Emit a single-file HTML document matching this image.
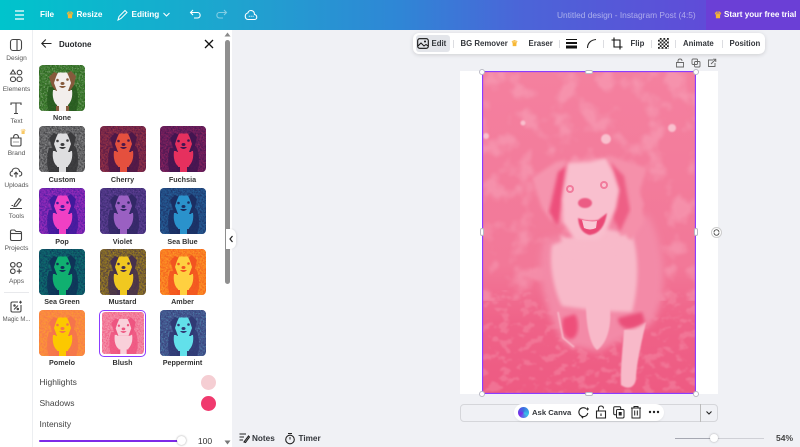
<!DOCTYPE html>
<html><head><meta charset="utf-8">
<style>
*{box-sizing:border-box}
html,body{margin:0;padding:0}
body{width:800px;height:447px;overflow:hidden;position:relative;background:#f0f1f5;font-family:"Liberation Sans",sans-serif;color:#222}
.a{position:absolute}
.top{left:0;top:0;width:800px;height:30px;background:linear-gradient(90deg,#00c4cc 0%,#1fa3cf 30%,#2f86d6 50%,#4b65d8 65%,#6a3fd8 100%);}
.top span{position:absolute;color:#fff;font-weight:bold;font-size:8.2px;line-height:30px;top:0;white-space:nowrap}
.rail{left:0;top:30px;width:33px;height:417px;background:#fff;border-right:1px solid #eceef1}
.ri{position:absolute;left:0;width:33px;text-align:center;font-size:6.6px;color:#555;white-space:nowrap}
.ri svg{display:block;position:absolute;left:9px;top:-17px;width:14px;height:14px;fill:none;stroke:#444;stroke-width:1.1}
.panel{left:33px;top:30px;width:199px;height:417px;background:#fff}
.th{position:absolute;width:46px;height:46px;border-radius:4px;overflow:hidden}
.th svg{display:block;width:46px;height:46px}
.lb{position:absolute;width:70px;text-align:center;font-size:7.2px;font-weight:bold;color:#333;white-space:nowrap;line-height:10px}
.h{position:absolute;background:#fff;border:1px solid #b9b9c4}
.tb{position:absolute;top:38px;font-size:7.8px;font-weight:bold;color:#33363b;line-height:12px;white-space:nowrap}
.sp{position:absolute;top:40px;width:1px;height:8px;background:#dcdde1}
</style></head><body>
<svg width="0" height="0" style="position:absolute">
<defs>
<filter id="sp" x="0" y="0" width="100%" height="100%"><feTurbulence type="fractalNoise" baseFrequency=".55" numOctaves="2" seed="3" result="t"/><feColorMatrix in="t" type="matrix" values="0 0 0 0 0 0 0 0 0 0 0 0 0 0 0 0 0 0 7 -3.300" result="n"/><feComposite in="SourceGraphic" in2="n" operator="in"/></filter>
<filter id="sp2" x="0" y="0" width="100%" height="100%"><feTurbulence type="fractalNoise" baseFrequency=".6" numOctaves="2" seed="8" result="t"/><feColorMatrix in="t" type="matrix" values="0 0 0 0 0 0 0 0 0 0 0 0 0 0 0 0 0 0 7 -3.700" result="n"/><feComposite in="SourceGraphic" in2="n" operator="in"/></filter>
<filter id="bok" x="0" y="0" width="100%" height="100%"><feTurbulence type="fractalNoise" baseFrequency=".045" numOctaves="3" seed="11" result="t"/><feColorMatrix in="t" type="matrix" values="0 0 0 0 0 0 0 0 0 0 0 0 0 0 0 0 0 0 5 -2.500" result="n"/><feComposite in="SourceGraphic" in2="n" operator="in"/><feGaussianBlur stdDeviation="1.200"/></filter>
<filter id="gra" x="0" y="0" width="100%" height="100%"><feTurbulence type="fractalNoise" baseFrequency=".09 .13" numOctaves="3" seed="5" result="t"/><feColorMatrix in="t" type="matrix" values="0 0 0 0 0 0 0 0 0 0 0 0 0 0 0 0 0 0 7 -3.700" result="n"/><feComposite in="SourceGraphic" in2="n" operator="in"/><feGaussianBlur stdDeviation=".7"/></filter>
<symbol id="dog" viewBox="0 0 46 46">
<rect width="46" height="46" style="fill:var(--b)"/>
<rect width="46" height="46" filter="url(#sp)" style="fill:var(--d)" opacity=".6"/>
<rect width="46" height="46" filter="url(#sp2)" style="fill:var(--l)" opacity=".25"/>
<path d="M10 22C7 32 8 42 10 46H37C40 38 40 28 36 20Z" style="fill:var(--d)" opacity=".85"/>
<path d="M14 25C13 32 15 38 18 40L19 46H28L29 40C32 37 34 32 33 25Z" style="fill:var(--l)"/>
<path d="M10 12L15 7L20 9H27L32 6L37 11L35 20L31 26H17L13 21Z" style="fill:var(--k)"/>
<path d="M19 7.500H28L30 12L32 18L29 26H18L15 18L17 12Z" style="fill:var(--l)"/>
<circle cx="18.500" cy="15" r="1.300" style="fill:var(--k)"/><circle cx="28.500" cy="14.500" r="1.300" style="fill:var(--k)"/>
<ellipse cx="23.500" cy="18.500" rx="2" ry="1.500" style="fill:var(--k)"/>
<path d="M20 21Q23.500 25 27 21Z" style="fill:var(--k)"/>
<rect x="17" y="41" width="3" height="5" style="fill:var(--k)"/><rect x="27" y="41" width="3" height="5" style="fill:var(--k)"/>
</symbol>
<filter id="b1"><feGaussianBlur stdDeviation="1.800"/></filter>
<filter id="b2"><feGaussianBlur stdDeviation="3.500"/></filter>
<filter id="b05"><feGaussianBlur stdDeviation=".7"/></filter>
<linearGradient id="bgG" x1="0" y1="0" x2="0" y2="1"><stop offset="0" stop-color="#f4809f"/><stop offset=".6" stop-color="#f27898"/><stop offset=".78" stop-color="#ef6288"/><stop offset="1" stop-color="#ee5a82"/></linearGradient>
</defs>
</svg>

<div class="a top">
<svg class="a" style="left:13px;top:8px" width="12" height="14" viewBox="0 0 12 14"><path d="M2 3H11M2 7H11M2 11H11" stroke="#fff" stroke-width="1.3"/></svg>
<span style="left:40px">File</span>
<span style="left:66px;color:#f7b733;font-size:9px">♛</span>
<span style="left:76.500px">Resize</span>
<svg class="a" style="left:116px;top:8px" width="13" height="14" viewBox="0 0 13 14"><path d="M2 12L3 8.500L9 2.500L11 4.500L5 10.500Z" fill="none" stroke="#fff" stroke-width="1"/></svg>
<span style="left:131.500px">Editing</span>
<svg class="a" style="left:162px;top:11px" width="9" height="7" viewBox="0 0 9 7"><path d="M1.500 2L4.500 5L7.500 2" fill="none" stroke="#fff" stroke-width="1.100"/></svg>
<svg class="a" style="left:189px;top:8px" width="13" height="13" viewBox="0 0 13 13"><path d="M4 2L1.500 4.500L4 7M2 4.500H8.500C12 4.500 12 10 8.500 10H5" fill="none" stroke="#fff" stroke-width="1.100"/></svg>
<svg class="a" style="left:215px;top:8px" width="13" height="13" viewBox="0 0 13 13" opacity=".45"><path d="M9 2L11.500 4.500L9 7M11 4.500H4.500C1 4.500 1 10 4.500 10H8" fill="none" stroke="#fff" stroke-width="1.100"/></svg>
<svg class="a" style="left:244px;top:8px" width="14" height="13" viewBox="0 0 14 13"><path d="M4 11.500H10.500C13.500 11.500 13.500 7 10.500 6.500C10.500 2 5 1 3.800 5C0.300 5.500 0.500 11.500 4 11.500Z" fill="none" stroke="#fff" stroke-width="1.100"/><path d="M4.800 8.300H5.800M6.700 8.300H7.700M8.600 8.300H9.600" stroke="#fff"/></svg>
<span style="left:557px;font-weight:normal;opacity:.5;font-size:8.400px">Untitled design - Instagram Post (4:5)</span>
<div class="a" style="left:706px;top:0;width:94px;height:30px;background:#6b3fd6"></div>
<span style="left:714px;color:#f7b733;font-size:9px">♛</span>
<span style="left:724px;font-size:8.100px">Start your free trial</span>
</div>

<div class="a rail">
<div class="ri" style="top:25px"><svg viewBox="0 0 14 14"><rect x="1.500" y="1.500" width="11" height="11" rx="2.500"/><path d="M8 1.500V12.500"/></svg>Design</div>
<div class="ri" style="top:56px"><svg viewBox="0 0 14 14"><path d="M4 1L6.500 5H1.500Z"/><circle cx="10.500" cy="3.500" r="2.300"/><rect x="1.500" y="8" width="5" height="4.500" rx="2"/><rect x="8" y="8" width="5" height="4.500" rx="2"/></svg>Elements</div>
<div class="ri" style="top:88px"><svg viewBox="0 0 14 14"><path d="M2 4V2H12V4M7 2V12.500M5 12.500H9"/></svg>Text</div>
<div class="ri" style="top:120px"><svg viewBox="0 0 14 14"><path d="M2 5H12V11.500Q12 13 10.500 13H3.500Q2 13 2 11.500Z"/><path d="M4.500 5Q4.500 1.500 7 1.500Q9.500 1.500 9.500 5"/><path d="M4.500 9H9.500" stroke-dasharray="1 1"/></svg>Brand<span class="a" style="left:20px;top:-22px;color:#f7b733;font-size:7px">♛</span></div>
<div class="ri" style="top:152px"><svg viewBox="0 0 14 14"><path d="M4 11H3C0.500 11 0.500 6.500 3 6.500C3.500 2 10 2 10.500 6.500C13.500 6.500 13.500 11 10.500 11H10"/><path d="M7 12.500V7.500M5 9.300L7 7.300L9 9.300"/></svg>Uploads</div>
<div class="ri" style="top:183px"><svg viewBox="0 0 14 14"><path d="M5.500 8.500L10 2.500L12 4L7.500 10L5 10.500Z"/><path d="M1 12.500H13M2.500 9.500H4"/></svg>Tools</div>
<div class="ri" style="top:215px"><svg viewBox="0 0 14 14"><path d="M1.500 3.500Q1.500 2 3 2H5.500L7 3.500H11Q12.500 3.500 12.500 5V11Q12.500 12.500 11 12.500H3Q1.500 12.500 1.500 11Z"/><path d="M1.500 5.500H12.500"/></svg>Projects</div>
<div class="ri" style="top:248px"><svg viewBox="0 0 14 14"><circle cx="3.800" cy="3.800" r="2.300"/><circle cx="10.200" cy="3.800" r="2.300"/><circle cx="3.800" cy="10.200" r="2.300"/><path d="M10.200 7.800V12.600M7.800 10.200H12.600"/></svg>Apps</div>
<div class="a" style="left:4px;top:262px;width:25px;height:1px;background:#e8e9ec"></div>
<div class="ri" style="top:287px;font-size:6px"><svg viewBox="0 0 14 14"><path d="M9 2H3.500Q2 2 2 3.500V10.500Q2 12 3.500 12H10.500Q12 12 12 10.500V5"/><path d="M5 9.500L9 5.500"/><circle cx="5.500" cy="5.500" r=".7"/><circle cx="8.800" cy="9" r=".7"/><path d="M11.500 .8V3.600M10.100 2.200H12.900"/></svg>Magic M...</div>
</div>

<div class="a panel"></div>
<svg class="a" style="left:40px;top:37px" width="13" height="13" viewBox="0 0 13 13"><path d="M11.500 6.500H2M5.800 2.500L1.800 6.500L5.800 10.500" fill="none" stroke="#222" stroke-width="1.100"/></svg>
<div class="a" style="left:59px;top:38px;font-size:8px;font-weight:bold;line-height:13px;color:#1f2226">Duotone</div>
<svg class="a" style="left:203px;top:38px" width="12" height="12" viewBox="0 0 12 12"><path d="M2 2L10 10M10 2L2 10" stroke="#111" stroke-width="1.300"/></svg>

<!-- thumbs -->
<div class="th" style="left:39px;top:65px"><svg viewBox="0 0 46 46" style="--b:#3f7d30;--d:#27591f;--k:#855a3c"><use href="#dog" style="--l:#f2eeec"/></svg></div>
<div class="lb" style="left:27px;top:113px">None</div>

<div class="th" style="left:39px;top:126px"><svg viewBox="0 0 46 46" style="--b:#6a6a6c;--d:#353537;--l:#dedee0;--k:#3a3a3c"><use href="#dog"/></svg></div>
<div class="th" style="left:99.500px;top:126px"><svg viewBox="0 0 46 46" style="--b:#7f2a48;--d:#4c1848;--l:#e4503e;--k:#4c1848"><use href="#dog"/></svg></div>
<div class="th" style="left:159.500px;top:126px"><svg viewBox="0 0 46 46" style="--b:#6c1f5c;--d:#421550;--l:#e6305e;--k:#421550"><use href="#dog"/></svg></div>
<div class="lb" style="left:27px;top:175px">Custom</div><div class="lb" style="left:87.500px;top:175px">Cherry</div><div class="lb" style="left:147.500px;top:175px">Fuchsia</div>

<div class="th" style="left:39px;top:188px"><svg viewBox="0 0 46 46" style="--b:#8228b6;--d:#401a9c;--l:#f040c4;--k:#401a9c"><use href="#dog"/></svg></div>
<div class="th" style="left:99.500px;top:188px"><svg viewBox="0 0 46 46" style="--b:#503888;--d:#322866;--l:#9a60c2;--k:#322866"><use href="#dog"/></svg></div>
<div class="th" style="left:159.500px;top:188px"><svg viewBox="0 0 46 46" style="--b:#245088;--d:#1b2e62;--l:#2a92cc;--k:#1b2e62"><use href="#dog"/></svg></div>
<div class="lb" style="left:27px;top:237px">Pop</div><div class="lb" style="left:87.500px;top:237px">Violet</div><div class="lb" style="left:147.500px;top:237px">Sea Blue</div>

<div class="th" style="left:39px;top:249px"><svg viewBox="0 0 46 46" style="--b:#0f5e6c;--d:#0f3358;--l:#10b070;--k:#0f3358"><use href="#dog"/></svg></div>
<div class="th" style="left:99.500px;top:249px"><svg viewBox="0 0 46 46" style="--b:#836a28;--d:#45304e;--l:#f0c820;--k:#45304e"><use href="#dog"/></svg></div>
<div class="th" style="left:159.500px;top:249px"><svg viewBox="0 0 46 46" style="--b:#fb8422;--d:#f25420;--l:#ffd040;--k:#f25420"><use href="#dog"/></svg></div>
<div class="lb" style="left:27px;top:297px">Sea Green</div><div class="lb" style="left:87.500px;top:297px">Mustard</div><div class="lb" style="left:147.500px;top:297px">Amber</div>

<div class="th" style="left:39px;top:310px"><svg viewBox="0 0 46 46" style="--b:#fb8b42;--d:#f5744c;--l:#fcc800;--k:#f5744c"><use href="#dog"/></svg></div>
<div class="a" style="left:99px;top:310px;width:47px;height:47px;border:1.500px solid #8b3dff;border-radius:5px"></div>
<div class="th" style="left:101.500px;top:312px;width:42px;height:42px;border-radius:3px"><svg viewBox="0 0 46 46" style="width:42px;height:42px;--b:#f4849f;--d:#ee5580;--l:#f9d0da;--k:#ee5580"><use href="#dog"/></svg></div>
<div class="th" style="left:159.500px;top:310px"><svg viewBox="0 0 46 46" style="--b:#46578f;--d:#303a74;--l:#62e0ea;--k:#303a74"><use href="#dog"/></svg></div>
<div class="lb" style="left:27px;top:358px">Pomelo</div><div class="lb" style="left:87.500px;top:358px">Blush</div><div class="lb" style="left:147.500px;top:358px">Peppermint</div>

<div class="a" style="left:39.500px;top:376px;font-size:8.500px;line-height:12px;color:#444">Highlights</div>
<div class="a" style="left:201px;top:375px;width:15px;height:15px;border-radius:50%;background:#f5ced3"></div>
<div class="a" style="left:39.500px;top:397px;font-size:8.500px;line-height:12px;color:#444">Shadows</div>
<div class="a" style="left:201px;top:396px;width:15px;height:15px;border-radius:50%;background:#f03a6e"></div>
<div class="a" style="left:39.500px;top:418px;font-size:8.500px;line-height:12px;color:#444">Intensity</div>
<div class="a" style="left:39px;top:440px;width:140px;height:2px;background:#7d2ae8;border-radius:1px"></div>
<div class="a" style="left:177px;top:436px;width:9px;height:9px;border-radius:50%;background:#fff;box-shadow:0 0 2px rgba(0,0,0,.4)"></div>
<div class="a" style="left:193px;top:435px;width:24px;font-size:8.500px;line-height:12px;text-align:center;color:#333">100</div>

<!-- scrollbar -->
<div class="a" style="left:225px;top:40px;width:5px;height:244px;background:#8f8f8f;border-radius:2.500px"></div>
<svg class="a" style="left:224px;top:32px" width="7" height="5"><path d="M3.500 0.500L6.500 4.500H.5Z" fill="#8a8a8a"/></svg>
<svg class="a" style="left:224px;top:440px" width="7" height="5"><path d="M3.500 4.500L6.500 .5H.5Z" fill="#777"/></svg>
<div class="a" style="left:226px;top:229px;width:10px;height:20px;background:#fff;border-radius:0 6px 6px 0;box-shadow:1px 0 2px rgba(0,0,0,.08)"></div>
<svg class="a" style="left:229px;top:235px" width="5" height="8"><path d="M3.500 1L1 4L3.500 7" fill="none" stroke="#222" stroke-width="1.200"/></svg>

<!-- toolbar -->
<div class="a" style="left:413px;top:33px;width:352px;height:21px;background:#fff;border-radius:6px;box-shadow:0 1px 4px rgba(0,0,0,.14)"></div>
<div class="a" style="left:416px;top:35px;width:34px;height:17px;background:#e3e5ea;border-radius:3px"></div>
<svg class="a" style="left:417px;top:38px" width="12" height="11" viewBox="0 0 12 11"><rect x=".7" y=".7" width="10.600" height="9.600" rx="2" fill="none" stroke="#111" stroke-width="1.100"/><path d="M1 8L4 5L7 8L9 6.500L11 8" fill="none" stroke="#111"/><circle cx="8" cy="3.500" r="1" fill="#111"/></svg>
<div class="tb" style="left:431.500px">Edit</div>
<div class="sp" style="left:453px"></div>
<div class="tb" style="left:460.500px">BG Remover</div>
<div class="tb" style="left:511px;color:#f7b733">♛</div>
<div class="tb" style="left:528.500px">Eraser</div>
<div class="sp" style="left:559px"></div>
<svg class="a" style="left:566px;top:38px" width="12" height="11"><rect y="1" width="11" height="1" fill="#111"/><rect y="4" width="11" height="2" fill="#111"/><rect y="7.500" width="11" height="3" fill="#111"/></svg>
<svg class="a" style="left:586px;top:38px" width="12" height="11"><path d="M1.500 10C1.500 5 5 2 10 1.500" fill="none" stroke="#222" stroke-width="1.100"/></svg>
<div class="sp" style="left:603px"></div>
<svg class="a" style="left:611px;top:37px" width="12" height="13" viewBox="0 0 12 13"><path d="M3 .5V10H11.500M.5 3H9V12.500" fill="none" stroke="#111" stroke-width="1.100"/></svg>
<div class="tb" style="left:630.500px">Flip</div>
<div class="sp" style="left:651px"></div>
<div class="a" style="left:658px;top:38px;width:11px;height:11px;background:repeating-conic-gradient(#222 0 25%,#fff 0 50%) 0 0/3.600px 3.600px"></div>
<div class="sp" style="left:675px"></div>
<div class="tb" style="left:683px">Animate</div>
<div class="sp" style="left:722px"></div>
<div class="tb" style="left:729.500px">Position</div>

<!-- small icons above canvas -->
<svg class="a" style="left:675px;top:58px" width="10" height="10" viewBox="0 0 10 10"><path d="M3 4.500V3Q3 1 5 1Q7 1 7 3M1.500 4.500H8.500V9H1.500Z" fill="none" stroke="#666" stroke-width=".9"/></svg>
<svg class="a" style="left:691px;top:58px" width="10" height="10" viewBox="0 0 10 10"><rect x="1" y="1" width="5.500" height="5.500" rx="1" fill="none" stroke="#666" stroke-width=".9"/><rect x="3.500" y="3.500" width="5.500" height="5.500" rx="1" fill="none" stroke="#666" stroke-width=".9"/></svg>
<svg class="a" style="left:707px;top:58px" width="10" height="10" viewBox="0 0 10 10"><path d="M6 2H1.500V8.500H8V5M4 6L8.500 1.500M6 1.200H8.800V4" fill="none" stroke="#666" stroke-width=".9"/></svg>

<!-- canvas -->
<div class="a" style="left:460px;top:71px;width:258px;height:323px;background:#fff"></div>
<svg class="a" style="left:482px;top:71px" width="214" height="323" viewBox="482 71 214 323">
<rect x="482" y="71" width="214" height="323" fill="url(#bgG)"/>
<rect x="482" y="71" width="214" height="230" fill="#f8a5bb" opacity=".5" filter="url(#bok)"/>
<rect x="482" y="290" width="214" height="104" fill="#f58fa9" opacity=".45" filter="url(#gra)"/>
<g filter="url(#b05)" fill="#f9c0ce">
<circle cx="606" cy="139" r="5"/><circle cx="486" cy="136" r="3"/><circle cx="523" cy="123" r="2.500"/><circle cx="672" cy="128" r="4"/>
</g>
<!-- body -->
<path d="M545 240C535 265 543 300 553 322L565 345L598 352L650 325C668 305 668 250 648 215Z" fill="#f38aa7" filter="url(#b2)"/>
<path d="M552 245C548 268 556 295 562 306L600 311L632 312C638 290 640 258 632 234L600 228Z" fill="#f8b9c9" filter="url(#b1)"/>
<path d="M586 305C586 325 590 345 597 350C605 345 612 330 610 308Z" fill="#f8b9c9" filter="url(#b05)"/>
<path d="M563 318C560 332 566 340 572 339C580 336 579 320 575 314Z" fill="#ee4f7a" filter="url(#b1)"/>
<path d="M558 312L563 338L574 347" stroke="#f8bccb" stroke-width="1.500" fill="none" filter="url(#b05)"/>
<path d="M624 330C623 345 620 372 621 385C628 390 635 388 636 378C637 360 641 345 646 322Z" fill="#f8b9c9" filter="url(#b05)"/>
<path d="M618 318C618 328 630 334 645 322L642 312Z" fill="#ea4f79" filter="url(#b1)"/>
<!-- ears -->
<path d="M532 178L556 162L566 160L561 197L552 222L542 208Z" fill="#f594ae" filter="url(#b1)"/>
<path d="M607 155L647 168L640 190L644 222L632 240L620 236L617 200Z" fill="#f590aa" filter="url(#b1)"/>
<!-- dark head edges -->
<path d="M558 172L566 166L562 200L558 226L549 212Z" fill="#ed4f7b" filter="url(#b1)"/>
<path d="M610 162L624 176L630 210L620 232L612 215L618 190Z" fill="#ee5f85" filter="url(#b1)"/>
<!-- face -->
<path d="M568 163L590 162L606 158L613 172L619 190L616 208L607 230L598 240L575 240L563 222L562 200Z" fill="#f9bfce" filter="url(#b1)"/>
<path d="M560 234C570 244 610 246 626 234L628 245L600 258L565 254Z" fill="#f8b9c9" filter="url(#b1)"/>
<circle cx="570" cy="189" r="4" fill="#f17b9c"/><circle cx="570" cy="189" r="2" fill="#f9c4d2"/>
<circle cx="604" cy="185" r="4" fill="#f17b9c"/><circle cx="604" cy="185" r="2" fill="#f9c4d2"/>
<ellipse cx="585" cy="203" rx="7" ry="5" fill="#ec5c84" filter="url(#b05)"/>
<path d="M578 218Q588 222 598 220L607 213Q604 233 590 235Q579 233 578 218Z" fill="#ea4a76" filter="url(#b05)"/>
<path d="M582 220Q590 222 597 221L596 228Q590 231 584 228Z" fill="#f9c9d6"/>
<rect x="482.500" y="71.500" width="213" height="322" fill="none" stroke="#8b3dff" stroke-width="1.300"/>
</svg>
<div class="h" style="left:479px;top:69px;width:6px;height:6px;border-radius:50%"></div>
<div class="h" style="left:693px;top:69px;width:6px;height:6px;border-radius:50%"></div>
<div class="h" style="left:479px;top:391px;width:6px;height:6px;border-radius:50%"></div>
<div class="h" style="left:693px;top:391px;width:6px;height:6px;border-radius:50%"></div>
<div class="h" style="left:585px;top:69.500px;width:8px;height:4px;border-radius:2px"></div>
<div class="h" style="left:585px;top:391.500px;width:8px;height:4px;border-radius:2px"></div>
<div class="h" style="left:480px;top:228px;width:4px;height:8px;border-radius:2px"></div>
<div class="h" style="left:694px;top:228px;width:4px;height:8px;border-radius:2px"></div>
<div class="a" style="left:711px;top:227px;width:11px;height:11px;border-radius:50%;background:#fff;border:1px solid #ccc"></div>
<svg class="a" style="left:713px;top:229px" width="7" height="7" viewBox="0 0 7 7"><path d="M1 3.500A2.500 2.500 0 0 1 6 3M6 3.500A2.500 2.500 0 0 1 1 4" fill="none" stroke="#333" stroke-width=".8"/></svg>

<!-- page bar -->
<div class="a" style="left:460px;top:404px;width:258px;height:18px;border:1px solid #d5d6da;border-radius:4px"></div>
<div class="a" style="left:700px;top:404px;width:1px;height:18px;background:#bbb"></div>
<svg class="a" style="left:705px;top:410px" width="8" height="6"><path d="M1.500 1.500L4 4L6.500 1.500" fill="none" stroke="#222" stroke-width="1.100"/></svg>
<div class="a" style="left:514px;top:404px;width:150px;height:17px;border-radius:9px;background:#fff;box-shadow:0 1px 2px rgba(0,0,0,.06)"></div>
<div class="a" style="left:518px;top:407px;width:11px;height:11px;border-radius:50%;background:conic-gradient(#3b6fe0,#38c4e8,#7d2ae8,#3b6fe0)"></div>
<div class="a" style="left:532px;top:406px;font-size:7.700px;font-weight:bold;line-height:13px;color:#33363b">Ask Canva</div>
<svg class="a" style="left:577px;top:406px" width="13" height="13" viewBox="0 0 13 13"><path d="M9 2.500A4.500 4.500 0 1 0 10.800 7M4.500 10.500L6 12.200" fill="none" stroke="#222" stroke-width="1.100"/><path d="M10.500 1.500V4.500M9 3H12" stroke="#222" stroke-width=".9"/></svg>
<svg class="a" style="left:595px;top:405px" width="12" height="14" viewBox="0 0 12 14"><path d="M3.500 6V3.500Q3.500 1 6 1Q8.500 1 8.500 3.500M1.500 6H10.500V13H1.500ZM6 8.500V11" fill="none" stroke="#222" stroke-width="1.100"/></svg>
<svg class="a" style="left:613px;top:406px" width="12" height="13" viewBox="0 0 12 13"><rect x=".7" y=".7" width="7" height="8" rx="1.200" fill="none" stroke="#222"/><rect x="3.500" y="3.500" width="7.500" height="8.500" rx="1.200" fill="#fff" stroke="#222"/><rect x="5.700" y="6" width="3" height="3.500" fill="#222"/></svg>
<svg class="a" style="left:630px;top:405px" width="12" height="14" viewBox="0 0 12 14"><path d="M1 3H11M4 3V1.500H8V3M2 3V13H10V3M4.700 5.500V10.500M7.300 5.500V10.500" fill="none" stroke="#222"/></svg>
<svg class="a" style="left:648px;top:410px" width="12" height="4"><circle cx="2" cy="2" r="1.200" fill="#222"/><circle cx="6" cy="2" r="1.200" fill="#222"/><circle cx="10" cy="2" r="1.200" fill="#222"/></svg>

<!-- footer -->
<svg class="a" style="left:239px;top:432px" width="11" height="12" viewBox="0 0 11 12"><path d="M.5 2H7M.5 5H5M.5 8H4M5 10L9.500 4L10.500 5L6.500 10.500Z" fill="none" stroke="#222" stroke-width="1.100"/></svg>
<div class="a" style="left:252px;top:432px;font-size:8.200px;font-weight:bold;line-height:13px;color:#33363b">Notes</div>
<svg class="a" style="left:284px;top:432px" width="12" height="13" viewBox="0 0 12 13"><circle cx="6" cy="7.500" r="4.300" fill="none" stroke="#222" stroke-width="1.100"/><path d="M4 1.500H8M6 7.500V5" stroke="#222"/></svg>
<div class="a" style="left:298.500px;top:432px;font-size:8.200px;font-weight:bold;line-height:13px;color:#33363b">Timer</div>
<div class="a" style="left:675px;top:437.500px;width:39px;height:1.500px;background:#a6a8b2"></div>
<div class="a" style="left:714px;top:437.500px;width:50px;height:1px;background:#cfd0d6"></div>
<div class="a" style="left:709.500px;top:434px;width:8px;height:8px;border-radius:50%;background:#fff;box-shadow:0 0 2px rgba(0,0,0,.3)"></div>
<div class="a" style="left:776px;top:432px;font-size:8.500px;font-weight:bold;line-height:13px;color:#444">54%</div>
</body></html>
